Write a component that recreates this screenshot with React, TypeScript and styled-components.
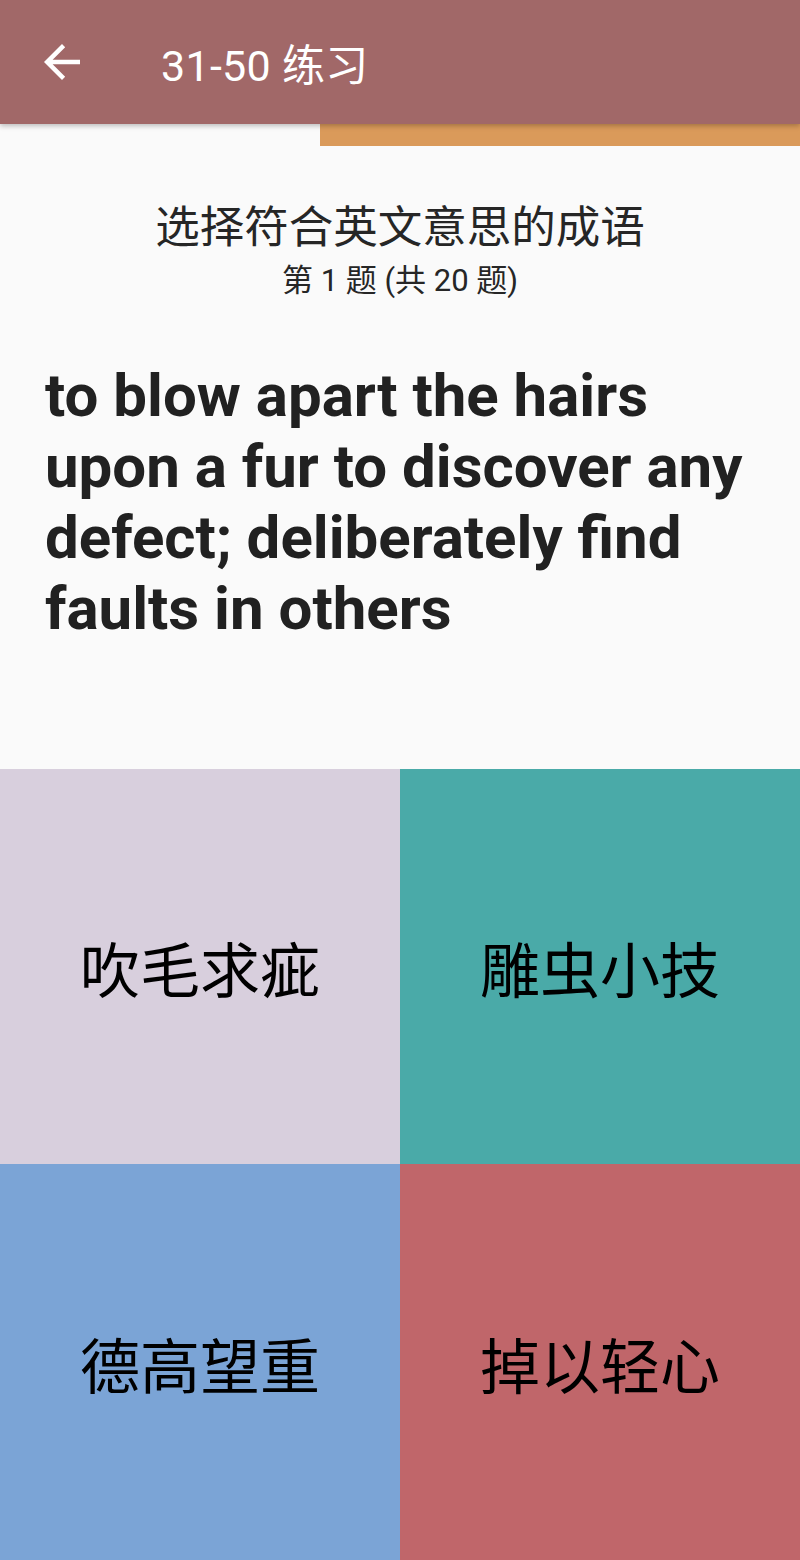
import React from "react";
import styled, { createGlobalStyle } from "styled-components";

const Global = createGlobalStyle`
  html, body { margin: 0; padding: 0; background: #fafafa; }
  * { box-sizing: border-box; }
`;

const Screen = styled.div`
  width: 800px;
  height: 1560px;
  display: flex;
  flex-direction: column;
  background: #fafafa;
  font-family: Roboto, "Noto Sans CJK SC", sans-serif;
  overflow: hidden;
`;

const AppBar = styled.header`
  height: 124px;
  flex: none;
  background: #a16868;
  display: flex;
  align-items: center;
  padding-left: 35px;
  box-shadow: 0 2px 5px rgba(0, 0, 0, 0.25);
  position: relative;
  z-index: 2;
`;

const BackButton = styled.button`
  width: 54px;
  height: 54px;
  padding: 0;
  border: 0;
  background: transparent;
  display: flex;
  align-items: center;
  justify-content: center;
  color: #fff;
`;

const AppTitle = styled.h1`
  margin: 0 0 0 72px;
  font-family: Roboto, "Noto Sans CJK SC", sans-serif;
  font-weight: 400;
  font-size: 43px;
  color: #fff;
  letter-spacing: 0.3px;
`;

const ProgressTrack = styled.div`
  height: 22px;
  flex: none;
  display: flex;
  justify-content: flex-end;
`;

const ProgressFill = styled.div`
  height: 100%;
  background: #da9a5a;
`;

const QuestionArea = styled.section`
  flex: 1;
  display: flex;
  flex-direction: column;
  padding: 56px 45px 0 45px;
`;

const Prompt = styled.div`
  text-align: center;
  font-family: Roboto, "Noto Sans CJK SC", sans-serif;
  font-size: 44.5px;
  line-height: 53px;
  color: #262626;
`;

const Counter = styled.div`
  margin-top: 8px;
  text-align: center;
  font-family: Roboto, "Noto Sans CJK SC", sans-serif;
  font-size: 31px;
  line-height: 36px;
  color: #262626;
`;

const Definition = styled.p`
  margin: 61px 0 0 0;
  font-family: Roboto, sans-serif;
  font-weight: 700;
  font-size: 60px;
  line-height: 71px;
  color: #212121;
`;

const Choices = styled.div`
  height: 791px;
  flex: none;
  display: grid;
  grid-template-columns: 1fr 1fr;
  grid-template-rows: 395px 396px;
`;

const Choice = styled.button<{ $bg: string }>`
  border: 0;
  margin: 0;
  padding: 0;
  background: ${(p) => p.$bg};
  display: flex;
  align-items: center;
  justify-content: center;
  font-family: "Noto Sans CJK SC", sans-serif;
  font-size: 60px;
  color: #000;
`;

const options = [
  { text: "吹毛求疵", bg: "#d8cfdd" },
  { text: "雕虫小技", bg: "#4aaaa8" },
  { text: "德高望重", bg: "#7ba4d6" },
  { text: "掉以轻心", bg: "#c0666a" },
];

export default function App() {
  return (
    <>
      <Global />
      <Screen>
        <AppBar>
          <BackButton aria-label="back">
            <svg width="54" height="54" viewBox="0 0 24 24" fill="currentColor">
              <path d="M20 11H7.83l5.59-5.59L12 4l-8 8 8 8 1.41-1.41L7.83 13H20v-2z" />
            </svg>
          </BackButton>
          <AppTitle>31-50 练习</AppTitle>
        </AppBar>
        <ProgressTrack>
          <ProgressFill style={{ width: "60%" }} />
        </ProgressTrack>
        <QuestionArea>
          <Prompt>选择符合英文意思的成语</Prompt>
          <Counter>第 1 题 (共 20 题)</Counter>
          <Definition>
            to blow apart the hairs upon a fur to discover any defect; deliberately find faults in others
          </Definition>
        </QuestionArea>
        <Choices>
          {options.map((o) => (
            <Choice key={o.text} $bg={o.bg}>
              {o.text}
            </Choice>
          ))}
        </Choices>
      </Screen>
    </>
  );
}
